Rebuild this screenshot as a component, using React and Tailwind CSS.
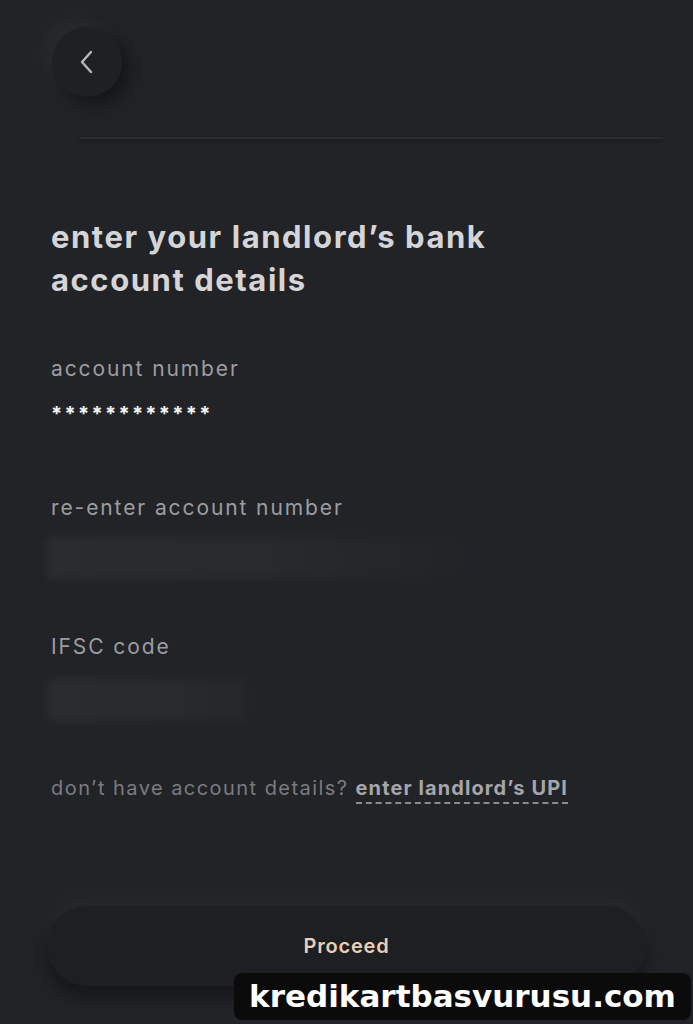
export default function App() {
  return (
    <div
      className="relative w-[693px] h-[1024px] overflow-hidden bg-[#222327]"
      style={{ fontFamily: "Inter, 'Noto Sans', sans-serif" }}
    >
      {/* top bar */}
      <div className="h-[137px] pt-[27px] pl-[52px]">
        <button className="w-[70px] h-[70px] rounded-full bg-[#1f2023] shadow-[-8px_-8px_18px_rgba(255,255,255,0.035),8px_8px_18px_rgba(0,0,0,0.4)] flex items-center justify-center">
          <svg width="16" height="24" viewBox="0 0 16 24" fill="none">
            <path d="M12 2 L3 12 L12 22" stroke="#b8b8bc" strokeWidth="2.4" strokeLinecap="round" strokeLinejoin="round" />
          </svg>
        </button>
      </div>
      <div className="h-[2px] ml-[80px] mr-[30px] bg-[#2a2b2f] shadow-[0_2px_4px_rgba(0,0,0,0.4)]" />

      <div className="px-[51px]">
        <h1 className="mt-[76px] text-[31px] leading-[43px] font-bold text-[#d5d5d8] tracking-[1.55px]">
          enter your landlord’s bank
          <br />
          account details
        </h1>

        <p className="mt-[55px] text-[21px] leading-[26px] text-[#9d9da1] tracking-[1.9px]">account number</p>
        <p className="mt-[20px] text-[20px] font-bold text-[#f2f2f2] tracking-[2.3px] leading-[24px]">************</p>

        <p className="mt-[69px] text-[21px] leading-[26px] text-[#9d9da1] tracking-[1.9px]">re-enter account number</p>
        <div className="mt-[16px] -ml-[4px] h-[42px] w-[430px] rounded-[4px] bg-gradient-to-r from-[#2b2c30] via-[#292a2e] to-[#222327] blur-[3px]" />

        <p className="mt-[55px] text-[21px] leading-[26px] text-[#9d9da1] tracking-[1.9px]">IFSC code</p>
        <div className="mt-[19px] -ml-[4px] h-[42px] w-[200px] rounded-[4px] bg-gradient-to-r from-[#2b2c30] via-[#2a2b2f] to-[#26272b] blur-[3px]" />

        <p className="mt-[54px] text-[20px] leading-[26px] text-[#7b7b80] tracking-[1.45px]">
          don’t have account details?{" "}
          <span className="font-bold text-[#a6a6aa] tracking-[1.1px] border-b-2 border-dashed border-[#8a8a8f] pb-[2px]">
            enter landlord’s UPI
          </span>
        </p>
      </div>

      {/* proceed button */}
      <div className="mt-[105px] px-[47px]">
        <button className="w-full h-[80px] rounded-[40px] bg-[#1e1f22] shadow-[0_-10px_20px_rgba(255,255,255,0.03),0_10px_20px_rgba(0,0,0,0.4)] text-[20px] font-semibold text-[#e8d0b6] tracking-[0.8px]">
          Proceed
        </button>
      </div>

      {/* watermark */}
      <div className="absolute left-[234px] top-[973px] w-[457px] h-[47px] rounded-[8px] bg-[#0b0b0c] flex items-center justify-center">
        <span className="text-[31px] font-bold text-white leading-none" style={{ fontFamily: "'DejaVu Sans', sans-serif" }}>
          kredikartbasvurusu.com
        </span>
      </div>
    </div>
  );
}
